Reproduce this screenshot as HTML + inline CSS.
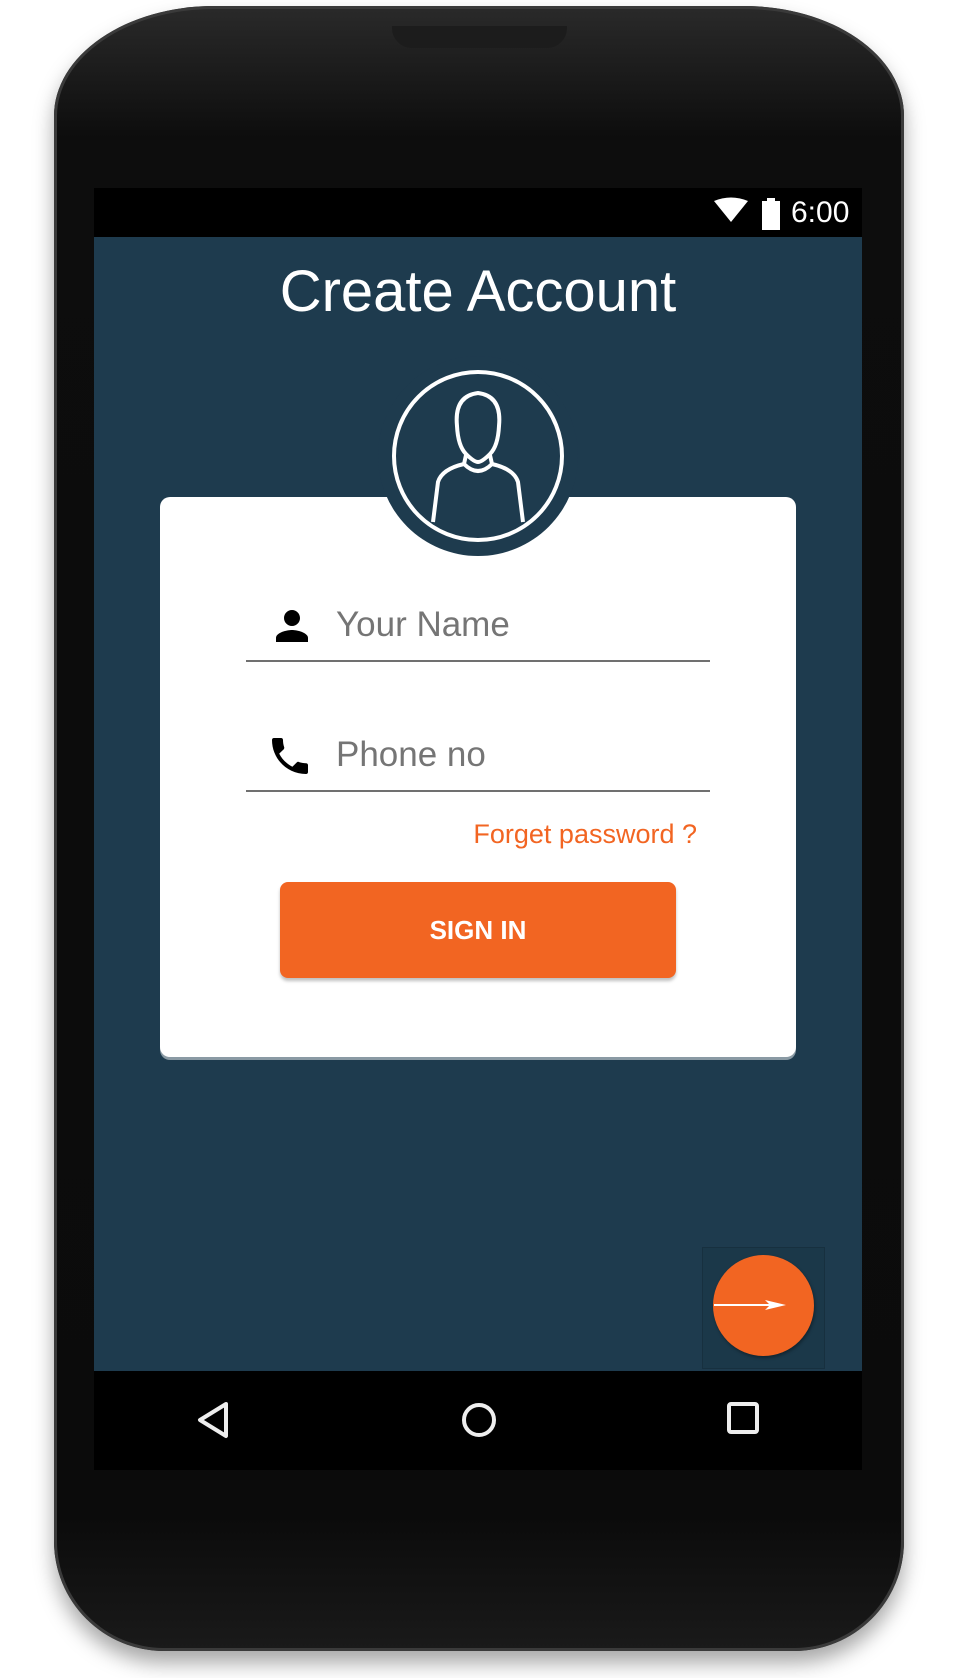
<!DOCTYPE html>
<html><head><meta charset="utf-8"><style>
html,body{margin:0;padding:0;width:958px;height:1678px;background:#fff;overflow:hidden;font-family:"Liberation Sans",sans-serif}
.phone{position:absolute;left:54px;top:6px;width:850px;height:1645px;border-radius:160px 160px 110px 110px / 110px 110px 110px 110px;background:linear-gradient(#2a2a2a,#0d0d0d 8%,#0b0b0b 92%,#1a1a1a);box-shadow:0 0 0 3px #3a3a3a inset,0 12px 20px rgba(0,0,0,.35)}
.speaker{position:absolute;left:338px;top:20px;width:175px;height:22px;background:#1c1c1c;border-radius:0 0 20px 20px}
.screen{position:absolute;left:94px;top:188px;width:768px;height:1282px;background:#1e3b4e;overflow:hidden}
.status{position:absolute;left:0;top:0;width:768px;height:49px;background:#000}
.nav{position:absolute;left:0;top:1183px;width:768px;height:99px;background:#000}
.title{position:absolute;left:0;top:72px;width:768px;text-align:center;color:#fff;font-size:58px;line-height:64px}
.card{position:absolute;left:66px;top:309px;width:636px;height:560px;background:#fff;border-radius:10px;box-shadow:0 3px 0 #8a9aa4}
.ul{position:absolute;height:2px;background:#707070;left:86px;width:464px}
.ph{position:absolute;left:176px;color:#757575;font-size:35px;line-height:35px}
.btn{position:absolute;left:120px;top:385px;width:396px;height:96px;background:#f26522;border-radius:8px;box-shadow:0 3px 3px rgba(0,0,0,.25);color:#fff;font-size:26px;text-align:center;line-height:96px;font-weight:bold}
</style></head><body>
<div class="phone"><div class="speaker"></div></div>
<div class="screen">
 <div class="status">
  <svg style="position:absolute;left:618px;top:9px" width="100" height="34">
   <path d="M2 4 Q19 -3 36 4 L19 25 Z" fill="#fff"/>
   <rect x="50" y="4" width="18" height="29" fill="#fff"/><rect x="55" y="1" width="8" height="4" fill="#fff"/>
  </svg>
  <div style="position:absolute;left:697px;top:8px;color:#fff;font-size:30px">6:00</div>
 </div>
 <div class="title">Create Account</div>
 <div class="card">
  <svg style="position:absolute;left:108px;top:105px" width="48" height="48" viewBox="0 0 24 24"><path d="M12 12c2.2 0 4-1.8 4-4s-1.8-4-4-4-4 1.8-4 4 1.8 4 4 4zm0 2c-2.7 0-8 1.3-8 4v2h16v-2c0-2.7-5.3-4-8-4z"/></svg>
  <div class="ph" style="top:110px">Your Name</div>
  <div class="ul" style="top:163px"></div>
  <svg style="position:absolute;left:106px;top:235px" width="48" height="48" viewBox="0 0 24 24"><path d="M6.6 10.8c1.4 2.8 3.8 5.1 6.6 6.6l2.2-2.2c.3-.3.7-.4 1-.2 1.1.4 2.3.6 3.6.6.6 0 1 .4 1 1V20c0 .6-.4 1-1 1C10.6 21 3 13.4 3 4c0-.6.4-1 1-1h3.5c.6 0 1 .4 1 1 0 1.3.2 2.5.6 3.6.1.3 0 .7-.2 1z"/></svg>
  <div class="ph" style="top:240px">Phone no</div>
  <div class="ul" style="top:293px"></div>
  <div style="position:absolute;right:99px;top:322px;color:#f26522;font-size:27px;line-height:30px">Forget password ?</div>
  <div class="btn">SIGN IN</div>
 </div>
 <svg style="position:absolute;left:284px;top:168px" width="200" height="202">
  <circle cx="100" cy="100" r="100" fill="#1e3b4e"/>
  <circle cx="100" cy="100" r="84" fill="none" stroke="#fff" stroke-width="4"/>
  <path d="M79 70 Q76 40 100 37 Q124 40 121 70 Q120 90 112 98 Q104 106 100 106 Q96 106 88 98 Q80 90 79 70 Z M88 99 L86 108 Q64 113 60 126 L55 166 M112 99 L114 108 Q136 113 140 126 L145 166 M86 108 Q100 122 114 108" fill="none" stroke="#fff" stroke-width="4" stroke-linejoin="round"/>
 </svg>
 <div style="position:absolute;left:608px;top:1059px;width:121px;height:120px;background:#1b3849;border:1px solid #17303f"></div>
 <div style="position:absolute;left:619px;top:1067px;width:101px;height:101px;border-radius:50%;background:#f26522;box-shadow:1px 2px 3px rgba(0,0,0,.35)"></div>
 <svg style="position:absolute;left:619px;top:1110px" width="80" height="14"><line x1="1" y1="7" x2="60" y2="7" stroke="#fff" stroke-width="2"/><path d="M52 2 L73 7 L52 12 L57 7 Z" fill="#fff"/></svg>
 <div class="nav">
  <svg style="position:absolute;left:100px;top:27px" width="40" height="44"><path d="M32 6 L6 22 L32 38 Z" fill="none" stroke="#eee" stroke-width="4" stroke-linejoin="round"/></svg>
  <svg style="position:absolute;left:364px;top:28px" width="42" height="42"><circle cx="21" cy="21" r="15" fill="none" stroke="#eee" stroke-width="4"/></svg>
  <svg style="position:absolute;left:630px;top:28px" width="40" height="40"><rect x="5" y="5" width="28" height="28" rx="2" fill="none" stroke="#eee" stroke-width="4"/></svg>
 </div>
</div>
</body></html>
